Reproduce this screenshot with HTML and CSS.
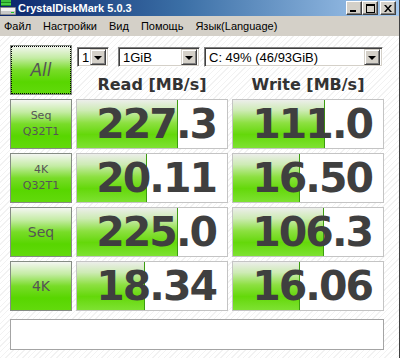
FILE: index.html
```html
<!DOCTYPE html>
<html lang="ru">
<head>
    <meta charset="UTF-8">
    <title>CrystalDiskMark 5.0.3</title>
    <link rel="stylesheet" href="styles.css">
</head>
<body>
<div class="window">
    <div class="titlebar">
        <svg class="app-icon" width="16" height="16" viewBox="0 0 16 16">
            <rect x="1" y="0" width="10" height="2" fill="#3cc43c"/>
            <rect x="1" y="2" width="10" height="1" fill="#1e8a1e"/>
            <rect x="1" y="3" width="10" height="2" fill="#46d046"/>
            <rect x="1" y="5" width="10" height="1" fill="#1e8a1e"/>
            <rect x="0" y="7" width="16" height="8" rx="1" fill="#8a8a8a"/>
            <rect x="1" y="8" width="14" height="3" fill="#f2f2f2"/>
            <rect x="1" y="11" width="14" height="3" fill="#c8c8c8"/>
            <rect x="11" y="12" width="3" height="1" fill="#22cc22"/>
        </svg>
        <span class="title">CrystalDiskMark 5.0.3</span>
        <div class="win-btns">
            <span class="win-btn"><svg width="8" height="8" viewBox="0 0 8 8"><rect x="0" y="6" width="6" height="2" fill="#000"/></svg></span>
            <span class="win-btn"><svg width="9" height="9" viewBox="0 0 9 9"><rect x="0.5" y="0.5" width="8" height="8" fill="none" stroke="#000"/><rect x="0" y="0" width="9" height="2" fill="#000"/></svg></span>
            <span class="win-btn close"><svg width="8" height="7" viewBox="0 0 8 7"><path d="M0 0 L2 0 L4 2.5 L6 0 L8 0 L5 3.5 L8 7 L6 7 L4 4.5 L2 7 L0 7 L3 3.5 Z" fill="#000"/></svg></span>
        </div>
    </div>
    <div class="menubar">
        <span>Файл</span>
        <span>Настройки</span>
        <span>Вид</span>
        <span>Помощь</span>
        <span>Язык(Language)</span>
    </div>
    <div class="content">
        <div class="bench">
            <div class="btn btn-all"><span>All</span></div>
            <div class="top-right">
                <div class="combos">
                    <div class="combo c-count"><span class="combo-text">1</span><span class="combo-arrow"></span></div>
                    <div class="combo c-size"><span class="combo-text">1GiB</span><span class="combo-arrow"></span></div>
                    <div class="combo c-drive"><span class="combo-text">C: 49% (46/93GiB)</span><span class="combo-arrow"></span></div>
                </div>
                <div class="heads">
                    <div class="head">Read [MB/s]</div>
                    <div class="head">Write [MB/s]</div>
                </div>
            </div>

            <div class="btn btn-two"><span>Seq</span><span>Q32T1</span></div>
            <div class="cell" style="--w:100px">227.3</div>
            <div class="cell" style="--w:91px">111.0</div>

            <div class="btn btn-two"><span>4K</span><span>Q32T1</span></div>
            <div class="cell" style="--w:69px">20.11</div>
            <div class="cell" style="--w:66px">16.50</div>

            <div class="btn btn-one"><span>Seq</span></div>
            <div class="cell" style="--w:100px">225.0</div>
            <div class="cell" style="--w:90px">106.3</div>

            <div class="btn btn-one"><span>4K</span></div>
            <div class="cell" style="--w:67px">18.34</div>
            <div class="cell" style="--w:66px">16.06</div>
        </div>
        <div class="status"></div>
    </div>
</div>
</body>
</html>
```

FILE: styles.css
```css
body {
    margin: 0;
    background-color: #fff;
    font-family: 'Liberation Sans', Arial, sans-serif;
}

.window {
    width: 399px;
    height: 358px;
    border-right: 1px solid #404040;
    display: flex;
    flex-direction: column;
    background-color: #d4d0c8;
}

/* Title bar */
.titlebar {
    height: 16px;
    display: flex;
    align-items: center;
    background: linear-gradient(to right, #0a246a, #3a6ea5 45%, #a6caf0);
}
.app-icon {
    margin: 0 2px 0 0;
    flex: none;
}
.title {
    color: #fff;
    font-weight: bold;
    font-size: 11px;
    flex: 1;
}
.win-btns {
    display: flex;
    margin-right: 3px;
}
.win-btn {
    width: 16px;
    height: 14px;
    box-sizing: border-box;
    background-color: #d4d0c8;
    border: 1px solid;
    border-color: #fff #404040 #404040 #fff;
    box-shadow: inset -1px -1px 0 #808080;
    display: flex;
    align-items: center;
    justify-content: center;
}
.win-btn.close {
    margin-left: 2px;
}

/* Menu */
.menubar {
    height: 20px;
    display: flex;
    align-items: center;
    gap: 12px;
    padding-left: 4px;
    font-size: 11px;
    color: #000;
}

/* Main area */
.content {
    flex: 1;
    padding: 9px 0 0 10px;
    background: repeating-linear-gradient(135deg, #fff 0 3px, #f2f2f2 3px 4px);
}

.bench {
    display: grid;
    grid-template-columns: 62px 152px 152px;
    grid-auto-rows: 50px;
    column-gap: 4px;
    row-gap: 4px;
}

.btn {
    box-sizing: border-box;
    border: 1px solid #858c84;
    background: linear-gradient(to bottom, #f4f6f2 0%, #c4eca4 25%, #78dc28 50%, #58d600 75%, #62da0c 100%);
    color: #555;
    font-family: 'DejaVu Sans', Verdana, sans-serif;
    display: flex;
    flex-direction: column;
    align-items: center;
    justify-content: center;
}
.btn-all {
    outline: 1px dotted #000;
    outline-offset: -2px;
    font-size: 17px;
    font-style: italic;
}
.btn-two {
    font-size: 11px;
    line-height: 16px;
}
.btn-one {
    font-size: 14px;
}

.top-right {
    grid-column: 2 / 4;
    display: flex;
    flex-direction: column;
}
.combos {
    display: flex;
    margin: 2px 0 0 1px;
}
.combo {
    height: 20px;
    box-sizing: border-box;
    background-color: #fff;
    border: 1px solid;
    border-color: #808080 #fff #fff #808080;
    box-shadow: inset 1px 1px 0 #404040, inset -1px -1px 0 #d4d0c8;
    display: flex;
    align-items: center;
    padding: 0 2px 0 4px;
    font-size: 13px;
}
.c-count { width: 32px; margin-right: 9px; }
.c-size { width: 82px; margin-right: 4px; }
.c-drive { width: 179px; }
.combo-text {
    flex: 1;
}
.combo-arrow {
    width: 16px;
    height: 16px;
    box-sizing: border-box;
    background-color: #d4d0c8;
    border: 1px solid;
    border-color: #d4d0c8 #404040 #404040 #d4d0c8;
    box-shadow: inset 1px 1px 0 #fff, inset -1px -1px 0 #808080;
    position: relative;
}
.combo-arrow::after {
    content: "";
    position: absolute;
    left: 3px;
    top: 6px;
    border-left: 4px solid transparent;
    border-right: 4px solid transparent;
    border-top: 4px solid #000;
}

.heads {
    display: grid;
    grid-template-columns: 152px 152px;
    column-gap: 4px;
    margin-top: 8px;
}
.head {
    text-align: center;
    font-family: 'DejaVu Sans', Verdana, sans-serif;
    font-weight: bold;
    font-size: 16px;
    color: #333;
}

.cell {
    box-sizing: border-box;
    border: 1px solid #c4c4c4;
    background:
        linear-gradient(#3c9c10, #3c9c10) var(--w) 0 / 1px 100% no-repeat,
        linear-gradient(to bottom, #eceeea 0%, #cdebb4 22%, #8ce040 48%, #64d80a 72%, #7ee232 100%) 0 0 / var(--w) 100% no-repeat,
        #fff;
    font-family: 'DejaVu Sans', Verdana, sans-serif;
    font-weight: bold;
    font-size: 41px;
    letter-spacing: -2px;
    color: #3f3f3f;
    text-align: right;
    padding-right: 11px;
    line-height: 48px;
}

.status {
    width: 374px;
    height: 31px;
    box-sizing: border-box;
    margin-top: 8px;
    border: 1px solid #a4a4a4;
    background-color: #fff;
}
```
